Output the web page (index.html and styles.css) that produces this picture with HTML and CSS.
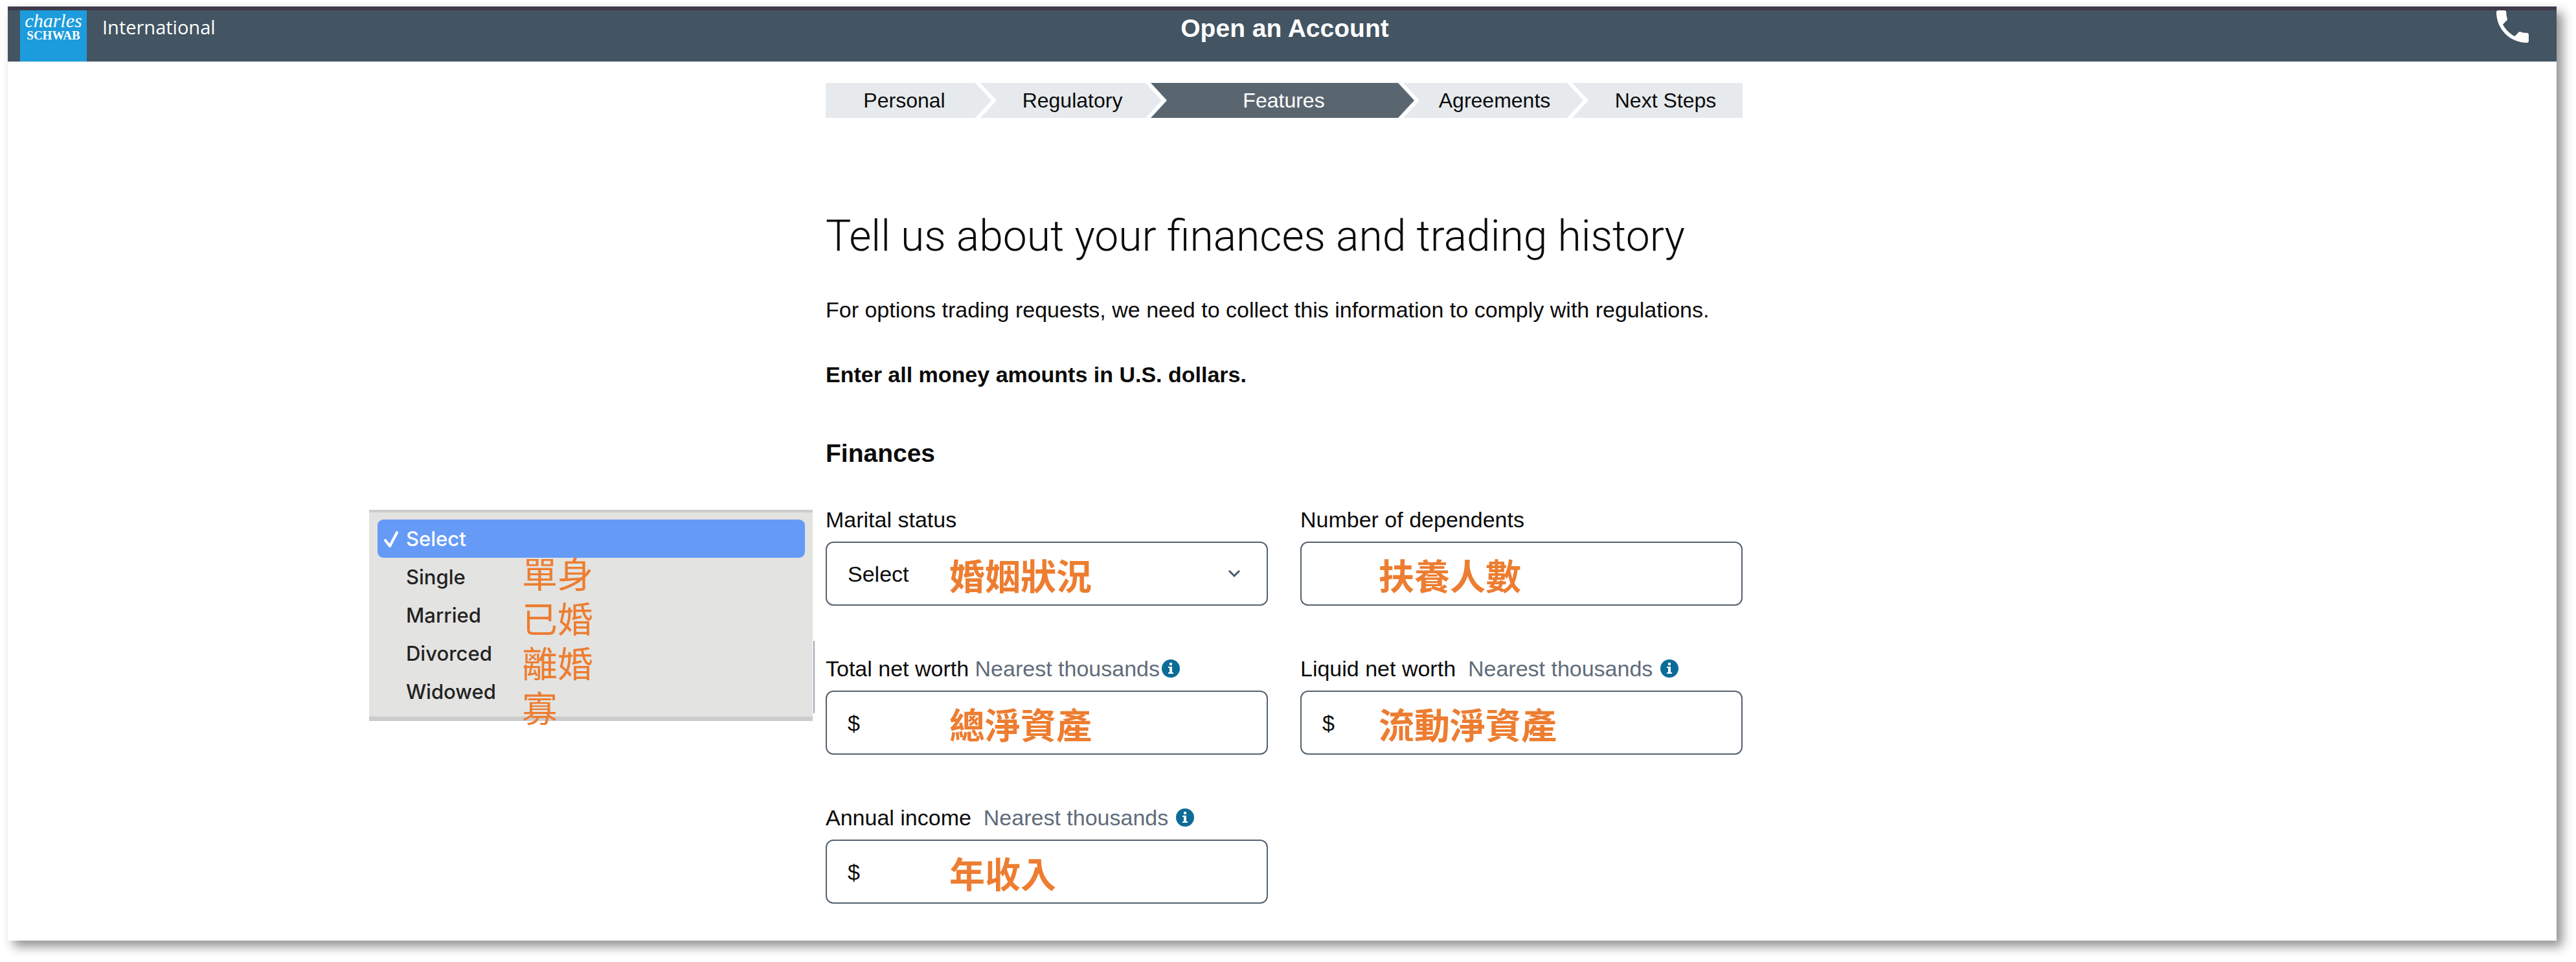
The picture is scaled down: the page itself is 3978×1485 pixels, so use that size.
FILE: index.html
```html
<!DOCTYPE html>
<html lang="en">
<head>
<meta charset="utf-8">
<meta name="viewport" content="width=device-width, initial-scale=1">
<title>Open an Account</title>
<link rel="stylesheet" href="styles.css">
</head>
<body>
<div class="card">
  <header class="topbar">
    <div class="brand">
      <a class="logo" href="#"><span class="logo-first">charles</span><span class="logo-last">SCHWAB</span></a>
      <span class="region">International</span>
    </div>
    <div class="title">Open an Account</div>
    <a class="phone" href="#" aria-label="Call us">
      <svg viewBox="3 3 18 18" width="50" height="50"><path fill="#fff" d="M6.62 10.79c1.44 2.83 3.76 5.14 6.59 6.59l2.2-2.2c.27-.27.67-.36 1.02-.24 1.12.37 2.33.57 3.57.57.55 0 1 .45 1 1V20c0 .55-.45 1-1 1-9.39 0-17-7.61-17-17 0-.55.45-1 1-1h3.5c.55 0 1 .45 1 1 0 1.25.2 2.45.57 3.57.11.35.03.74-.25 1.02l-2.2 2.2z"/></svg>
    </a>
  </header>

  <main class="content">
    <ol class="steps">
      <li class="step step-first">Personal</li>
      <li class="step">Regulatory</li>
      <li class="step step-current" aria-current="step">Features</li>
      <li class="step">Agreements</li>
      <li class="step step-last">Next Steps</li>
    </ol>

    <h1>Tell us about your finances and trading history</h1>
    <p class="lead">For options trading requests, we need to collect this information to comply with regulations.</p>
    <p class="note">Enter all money amounts in U.S. dollars.</p>
    <h2>Finances</h2>

    <form class="fields">
      <div class="field">
        <div class="label-row"><label for="marital">Marital status</label></div>
        <div class="control">
          <select id="marital">
            <option>Select</option>
            <option>Single</option>
            <option>Married</option>
            <option>Divorced</option>
            <option>Widowed</option>
          </select>
          <svg class="chevron" viewBox="0 0 20 13" width="20" height="13"><path d="M2 2l8 8 8-8" fill="none" stroke="#4a5a68" stroke-width="3"/></svg>
          <span class="gloss" lang="zh-Hant">婚姻狀況</span>
        </div>
        <div class="menu">
          <ul class="options" role="listbox" aria-label="Marital status">
            <li class="option option-on" role="option" aria-selected="true"><svg class="check" viewBox="0 0 24 26" width="24" height="26"><path d="M3 14l7 9L21 2" fill="none" stroke="#fff" stroke-width="4" stroke-linecap="round" stroke-linejoin="round"/></svg>Select</li>
            <li class="option" role="option">Single</li>
            <li class="option" role="option">Married</li>
            <li class="option" role="option">Divorced</li>
            <li class="option" role="option">Widowed</li>
          </ul>
          <ul class="menu-gloss" lang="zh-Hant">
            <li>單身</li>
            <li>已婚</li>
            <li>離婚</li>
            <li>寡</li>
          </ul>
        </div>
      </div>

      <div class="field">
        <div class="label-row"><label for="dependents">Number of dependents</label></div>
        <div class="control">
          <input id="dependents" type="text">
          <span class="gloss gloss-right" lang="zh-Hant">扶養人數</span>
        </div>
      </div>

      <div class="field">
        <div class="label-row label-tight">
          <label for="networth">Total net worth <span class="hint">Nearest thousands</span></label>
          <button type="button" class="info" aria-label="About total net worth"><svg viewBox="0 0 28 28" width="28" height="28"><circle cx="14" cy="14" r="14" fill="#0d6c97"/><path fill="#fff" d="M12 5h4v4h-4zM10 11h6v9h2v2h-8v-2h2v-7h-2z"/></svg></button>
        </div>
        <div class="control">
          <span class="currency">$</span>
          <input id="networth" type="text">
          <span class="gloss" lang="zh-Hant">總淨資產</span>
        </div>
      </div>

      <div class="field">
        <div class="label-row">
          <label for="liquid">Liquid net worth&nbsp; <span class="hint">Nearest thousands</span></label>
          <button type="button" class="info" aria-label="About liquid net worth"><svg viewBox="0 0 28 28" width="28" height="28"><circle cx="14" cy="14" r="14" fill="#0d6c97"/><path fill="#fff" d="M12 5h4v4h-4zM10 11h6v9h2v2h-8v-2h2v-7h-2z"/></svg></button>
        </div>
        <div class="control">
          <span class="currency">$</span>
          <input id="liquid" type="text">
          <span class="gloss gloss-right" lang="zh-Hant">流動淨資產</span>
        </div>
      </div>

      <div class="field">
        <div class="label-row">
          <label for="income">Annual income&nbsp; <span class="hint">Nearest thousands</span></label>
          <button type="button" class="info" aria-label="About annual income"><svg viewBox="0 0 28 28" width="28" height="28"><circle cx="14" cy="14" r="14" fill="#0d6c97"/><path fill="#fff" d="M12 5h4v4h-4zM10 11h6v9h2v2h-8v-2h2v-7h-2z"/></svg></button>
        </div>
        <div class="control">
          <span class="currency">$</span>
          <input id="income" type="text">
          <span class="gloss" lang="zh-Hant">年收入</span>
        </div>
      </div>
    </form>
  </main>
</div>
</body>
</html>
```
FILE: styles.css
```css
* { box-sizing: border-box; }

body {
  margin: 0;
  padding: 10px 30px 33px 12px;
  background: #fff;
  color: #0b0b0b;
  font: 34px/40px "Liberation Sans", Arial, sans-serif;
}

ul, ol { margin: 0; padding: 0; list-style: none; }

.card {
  background: #fff;
  box-shadow: 9px 9px 16px rgba(0, 0, 0, .44);
}

.topbar {
  display: grid;
  grid-template-columns: 1fr auto 1fr;
  height: 85px;
  padding-left: 8px;
  border-top: 6px solid #403a4b;
  background: #435462;
  color: #fff;
}

.brand { display: flex; gap: 24px; }

.logo {
  display: flex;
  flex-direction: column;
  align-items: center;
  width: 103px;
  margin-left: 11px;
  padding-top: 3px;
  background: #1c9cdc;
  color: #fff;
  font-family: "Liberation Serif", "Times New Roman", serif;
  text-decoration: none;
}

.logo-first { font-size: 30px; font-style: italic; line-height: 26px; }
.logo-last { font-size: 19px; font-weight: 700; line-height: 20px; }

.region { padding-top: 6px; font: 29px/40px "Open Sans", sans-serif; }
.title { padding-top: 6px; font-size: 39px; font-weight: 700; line-height: 44px; }
.phone { justify-self: end; height: 50px; margin-right: 43px; }
.phone svg, .info svg { display: block; }

.content {
  box-sizing: content-box;
  max-width: 1416px;
  margin: 0 auto;
  padding: 33px 0 57px 6px;
}

.steps {
  display: grid;
  grid-template-columns: 239fr 263fr 390fr 261fr 263fr;
  font-size: 32px;
  line-height: 54px;
  text-align: center;
}

.step {
  margin-right: -17px;
  padding-left: 4px;
  background: #e6eaed;
  clip-path: polygon(0 0, calc(100% - 25px) 0, 100% 50%, calc(100% - 25px) 100%, 0 100%, 25px 50%);
}

.step-first {
  padding-right: 17px;
  clip-path: polygon(0 0, calc(100% - 25px) 0, 100% 50%, calc(100% - 25px) 100%, 0 100%);
}

.step-current { background: #5a666f; color: #fff; }

.step-last {
  margin-right: 0;
  padding-left: 25px;
  clip-path: polygon(0 0, 100% 0, 100% 100%, 0 100%, 25px 50%);
}

h1 {
  margin: 143px 0 53px;
  font: 300 66px/80px Roboto, sans-serif;
}

.lead { margin: 0 0 60px; }
.note { margin: 0 0 78px; font-weight: 700; }
h2 { margin: 0 0 58px; font-size: 39px; line-height: 48px; }

.fields {
  display: grid;
  grid-template-columns: 1fr 1fr;
  gap: 77px 50px;
}

.field { position: relative; }

.label-row {
  display: flex;
  align-items: center;
  gap: 12px;
  margin-bottom: 14px;
}

.label-tight { gap: 3px; }
.hint { color: #5f6c7a; }

.info {
  padding: 0;
  border: 0;
  background: none;
}

.control {
  position: relative;
  display: flex;
  align-items: center;
  height: 99px;
  padding: 0 32px;
  border: 2px solid #55626e;
  border-radius: 12px;
}

.control select, .control input {
  flex: 1;
  min-width: 0;
  height: 80px;
  padding: 0;
  border: 0;
  outline: 0;
  appearance: none;
  background: none;
  color: inherit;
  font: inherit;
}

.chevron { margin-right: 8px; }

.gloss {
  position: absolute;
  left: 189px;
  color: #ed7d31;
  font: 700 55px/80px "Noto Sans CJK TC", sans-serif;
}

.gloss-right { left: 119px; }

/* open list beside the marital status field */
.menu {
  position: absolute;
  top: 5px;
  left: -705px;
  width: 685px;
  border-top: 4px solid #ccc;
  border-bottom: 7px solid #ccc;
  background: #e3e3e1;
}

.menu::after {
  content: "";
  position: absolute;
  top: 198px;
  right: -3px;
  width: 2px;
  height: 112px;
  border-radius: 2px;
  background: #9fa7ae;
}

.options {
  padding: 11px 12px 9px 13px;
  color: #222;
  font: 500 31px/59px Inter, sans-serif;
}

.option { position: relative; padding-left: 44px; border-radius: 9px; }
.option-on { background: #659bf7; color: #fff; }
.check { position: absolute; top: 18px; left: 9px; }

.menu-gloss {
  position: absolute;
  top: 58px;
  left: 236px;
  color: #ed7d31;
  font: 400 55px/69px "Noto Sans CJK TC", sans-serif;
}
```
